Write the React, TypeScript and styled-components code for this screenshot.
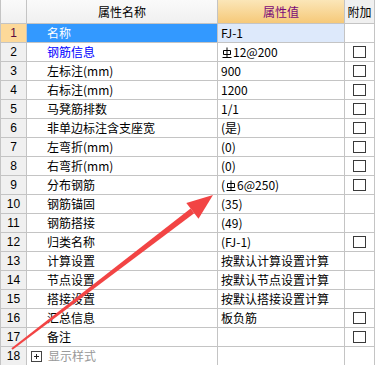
import React from "react";
import styled, { createGlobalStyle, css } from "styled-components";

const GlobalStyle = createGlobalStyle`
  *, *::before, *::after { box-sizing: border-box; }
  html, body { margin: 0; padding: 0; background: #fff; overflow: hidden; }
  body {
    font-family: "Noto Sans CJK SC", "Liberation Sans", sans-serif;
    font-size: 12px;
    color: #000;
  }
`;

const Page = styled.div`
  position: relative;
  width: 376px;
  height: 365px;
  overflow: hidden;
`;

const Grid = styled.div`
  display: grid;
  grid-template-columns: 26px 191px 127px 30px;
  grid-template-rows: 24px;
  grid-auto-rows: 19px;
  border-left: 1px solid #c4c4c4;
`;

const Cell = styled.div`
  display: flex;
  align-items: center;
  border-right: 1px solid #c4c4c4;
  border-bottom: 1px solid #c4c4c4;
  overflow: hidden;
  white-space: nowrap;
  line-height: 18px;
`;

type HeadKind = "plain" | "value" | "extra";

const HeadCell = styled(Cell)<{ $kind: HeadKind }>`
  justify-content: center;
  font-size: 12px;
  ${(p) =>
    p.$kind === "value"
      ? css`
          background: linear-gradient(#fbe6b8, #f6c979);
          color: #7a0a78;
        `
      : p.$kind === "extra"
      ? css`
          background: #f0f0f0;
        `
      : css`
          background: linear-gradient(#fafafa, #f0f0f0);
        `}
`;

const NumCell = styled(Cell)<{ $active?: boolean }>`
  justify-content: center;
  background: ${(p) => (p.$active ? "#fdd999" : "#f0f0f0")};
  color: ${(p) => (p.$active ? "#5a0a40" : "#000")};
  font-family: "Liberation Sans", sans-serif;
  font-size: 12px;
`;

type Tone = "normal" | "link" | "muted";

const NameCell = styled(Cell)<{ $active?: boolean; $tone: Tone }>`
  padding-left: 20px;
  background: ${(p) => (p.$active ? "#3399ff" : "#fff")};
  color: ${(p) =>
    p.$active ? "#fff" : p.$tone === "link" ? "#0000ff" : p.$tone === "muted" ? "#999" : "#000"};
`;

const GroupCell = styled(NameCell)`
  padding-left: 4px;
  gap: 6px;
`;

const ValueCell = styled(Cell)<{ $active?: boolean }>`
  padding-left: 3px;
  background: ${(p) => (p.$active ? "#dde9fb" : "#fff")};
`;

const ExtraCell = styled(Cell)`
  justify-content: center;
  background: #fff;
`;

const Check = styled.span`
  display: block;
  width: 13px;
  height: 12px;
  border: 1px solid #3a3a3a;
  background: #fff;
`;

const Expander = styled.span`
  position: relative;
  display: block;
  width: 11px;
  height: 11px;
  border: 1px solid #444;
  &::before,
  &::after {
    content: "";
    position: absolute;
    background: #222;
  }
  &::before { left: 2px; right: 2px; top: 4px; height: 1px; }
  &::after { top: 2px; bottom: 2px; left: 4px; width: 1px; }
`;

const Rebar = () => (
  <svg width="10" height="11" viewBox="0 0 10 11" style={{ margin: "0 1px 0 1px" }}>
    <path d="M5 0.5V10M1.5 3.5h7v4h-7zM0.5 10.5h9" fill="none" stroke="#000" strokeWidth="1" />
  </svg>
);

const Overlay = styled.svg`
  position: absolute;
  left: 0;
  top: 0;
  pointer-events: none;
`;

type Row = {
  name: string;
  value: React.ReactNode;
  check?: boolean;
  tone?: Tone;
};

const rows: Row[] = [
  { name: "名称", value: "FJ-1" },
  { name: "钢筋信息", value: <><Rebar />12@200</>, check: true, tone: "link" },
  { name: "左标注(mm)", value: "900", check: true },
  { name: "右标注(mm)", value: "1200", check: true },
  { name: "马凳筋排数", value: "1/1", check: true },
  { name: "非单边标注含支座宽", value: "(是)", check: true },
  { name: "左弯折(mm)", value: "(0)", check: true },
  { name: "右弯折(mm)", value: "(0)", check: true },
  { name: "分布钢筋", value: <>( <Rebar />6@250)</>, check: true },
  { name: "钢筋锚固", value: "(35)" },
  { name: "钢筋搭接", value: "(49)" },
  { name: "归类名称", value: "(FJ-1)", check: true },
  { name: "计算设置", value: "按默认计算设置计算" },
  { name: "节点设置", value: "按默认节点设置计算" },
  { name: "搭接设置", value: "按默认搭接设置计算" },
  { name: "汇总信息", value: "板负筋", check: true },
  { name: "备注", value: "", check: true },
];

const Arrow = () => (
  <Overlay width="376" height="365" viewBox="0 0 376 365">
    <polygon
      points="11.4,348.2 12.6,349.8 194.2,213.2 190.6,208.4"
      fill="#f24444"
    />
    <polygon points="213,195 198.5,218.7 186.3,202.9" fill="#f24444" />
  </Overlay>
);

export default function App() {
  return (
    <Page>
      <GlobalStyle />
      <Grid>
        <HeadCell $kind="plain" />
        <HeadCell $kind="plain">属性名称</HeadCell>
        <HeadCell $kind="value">属性值</HeadCell>
        <HeadCell $kind="extra">附加</HeadCell>
        {rows.map((r, i) => (
          <React.Fragment key={i}>
            <NumCell $active={i === 0}>{i + 1}</NumCell>
            <NameCell $active={i === 0} $tone={r.tone ?? "normal"}>
              {r.name}
            </NameCell>
            <ValueCell $active={i === 0}>{r.value}</ValueCell>
            <ExtraCell>{r.check && <Check />}</ExtraCell>
          </React.Fragment>
        ))}
        <NumCell>18</NumCell>
        <GroupCell $tone="muted">
          <Expander />
          显示样式
        </GroupCell>
        <ValueCell />
        <ExtraCell />
      </Grid>
      <Arrow />
    </Page>
  );
}
